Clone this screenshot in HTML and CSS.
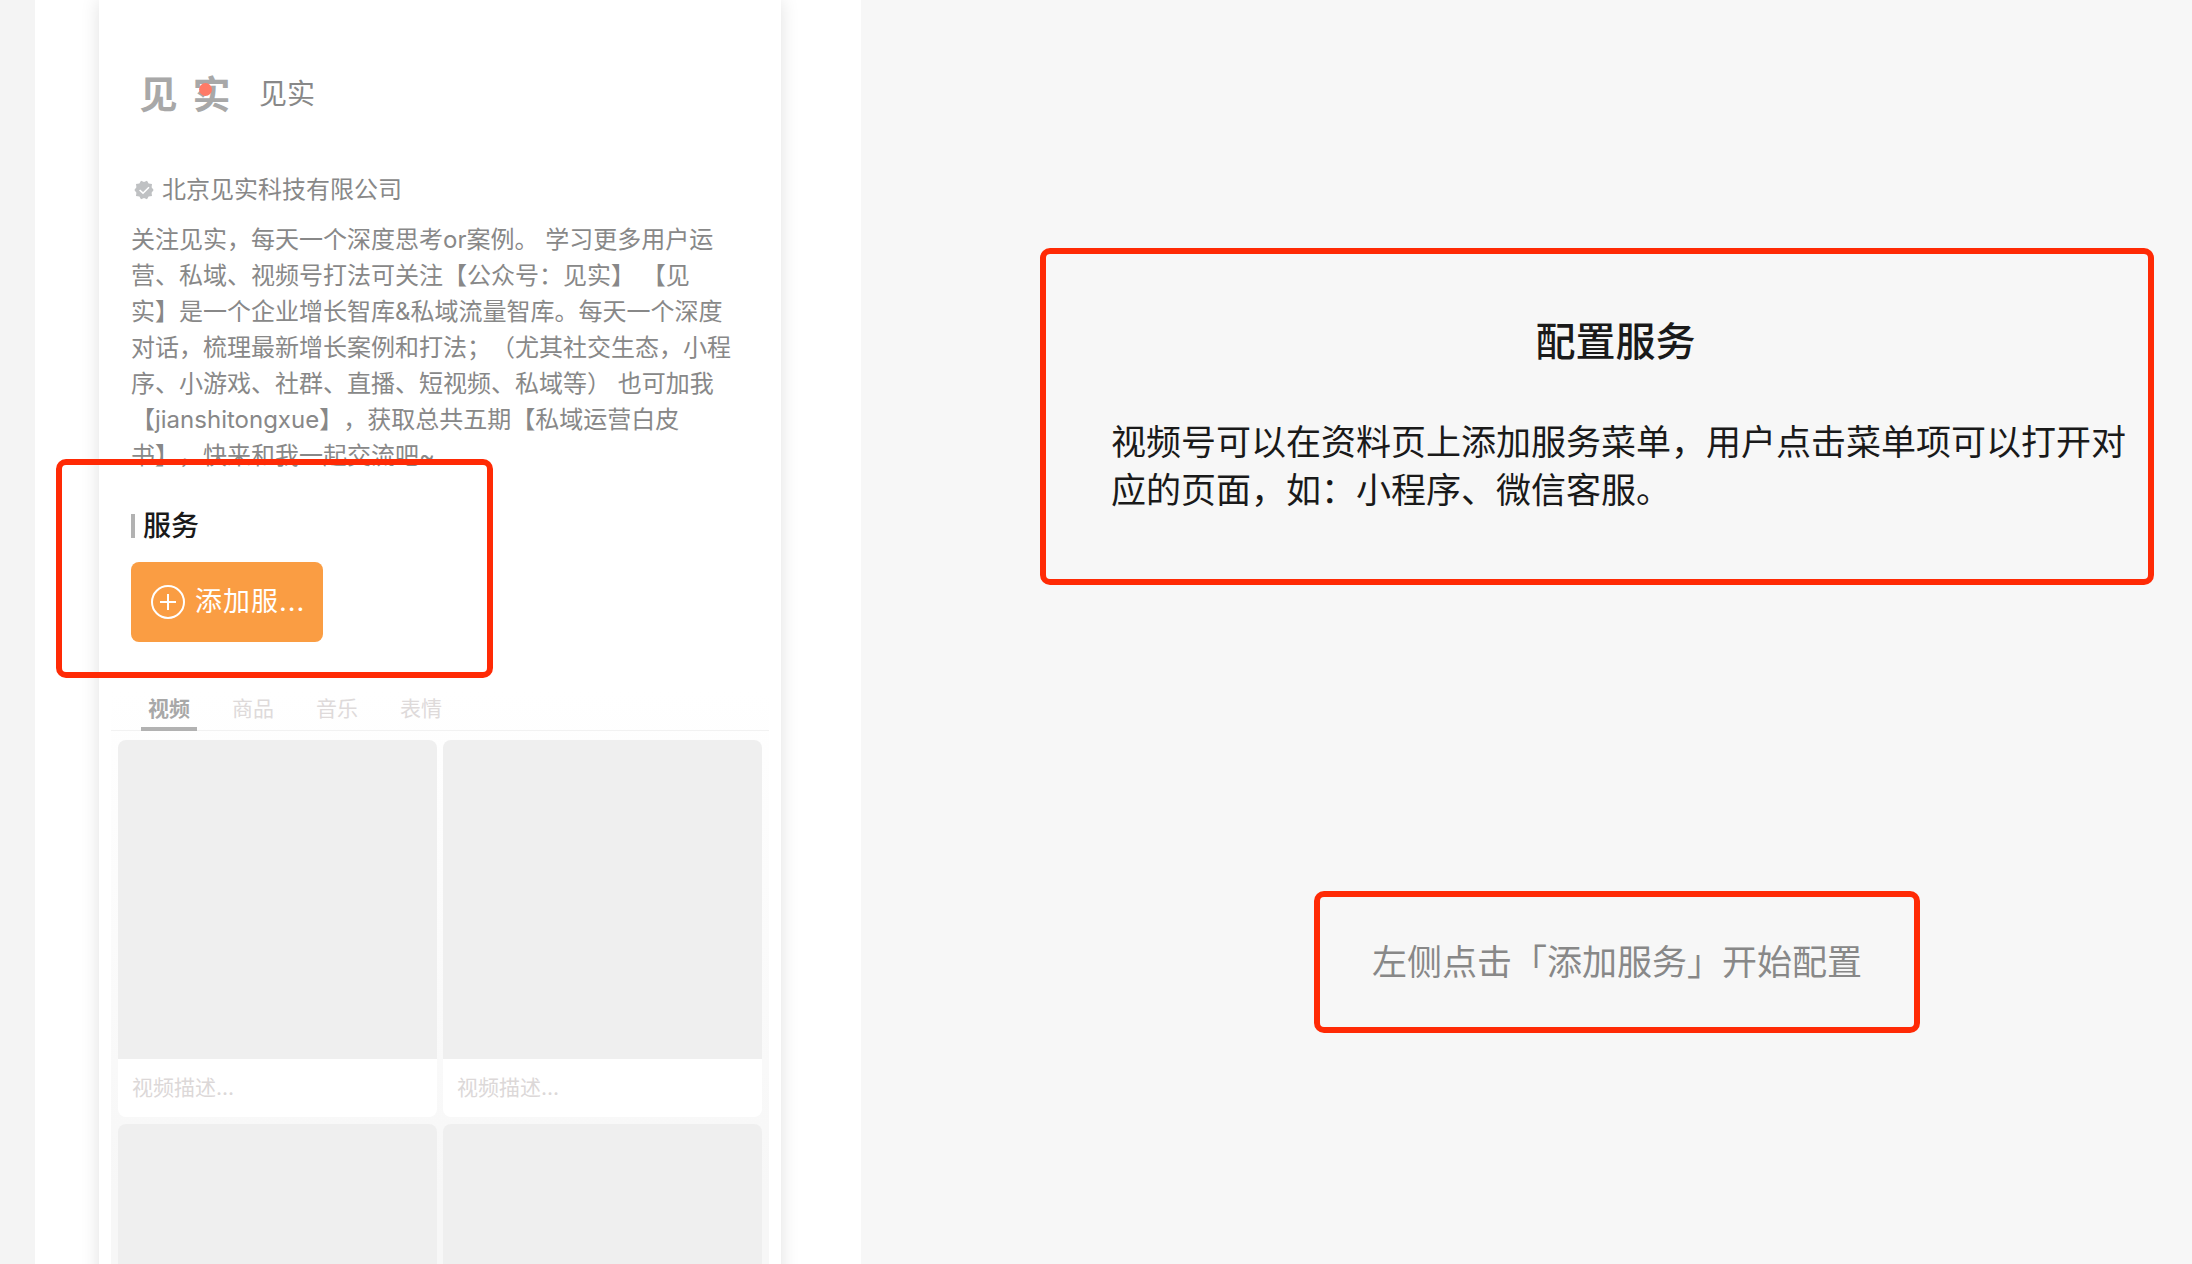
FILE: index.html
```html
<!DOCTYPE html>
<html lang="zh-CN">

<head>
  <meta charset="utf-8">
  <title>配置服务</title>
  <link rel="stylesheet" href="styles.css">
</head>

<body>
  <div class="page">
    <div class="preview">
      <div class="phone">
        <div class="profile">
          <div class="profile-header">
            <div class="logo">
              <span>见</span>
              <span>实</span>
              <i class="logo-dot"></i>
            </div>
            <div class="name">见实</div>
          </div>

          <div class="company">
            <svg class="badge" viewBox="0 0 20 20">
              <path d="M7 0.8 L10 2 L13 0.8 L14.6 3.6 L18 4 L17.6 7.2 L19.6 10 L17.6 12.8 L18 16 L14.6 16.4 L13 19.2 L10 18 L7 19.2 L5.4 16.4 L2 16 L2.4 12.8 L0.4 10 L2.4 7.2 L2 4 L5.4 3.6 Z" fill="#bfc1c3" />
              <path d="M5.6 10 L9 13.2 L15 7.2" fill="none" stroke="#fff" stroke-width="1.6" />
            </svg>
            北京见实科技有限公司
          </div>

          <p class="desc">关注见实，每天一个深度思考or案例。 学习更多用户运<br>营、私域、视频号打法可关注【公众号：见实】 【见<br>实】是一个企业增长智库&amp;私域流量智库。每天一个深度<br>对话，梳理最新增长案例和打法；（尤其社交生态，小程<br>序、小游戏、社群、直播、短视频、私域等） 也可加我<br>【jianshitongxue】，获取总共五期【私域运营白皮<br>书】，快来和我一起交流吧~</p>

          <div class="service">
            <h3 class="service-title">服务</h3>
            <button class="add-btn" type="button">
              <svg class="add-icon" viewBox="0 0 34 34" fill="none" stroke="#fff" stroke-width="2">
                <circle cx="17" cy="17" r="16" />
                <path d="M17 9 V25 M9 17 H25" />
              </svg>
              <span>添加服...</span>
            </button>
            <div class="mark service-mark"></div>
          </div>
        </div>

        <div class="videos">
          <div class="tabs">
            <div class="tab active">视频</div>
            <div class="tab">商品</div>
            <div class="tab">音乐</div>
            <div class="tab">表情</div>
          </div>
          <div class="video-list">
            <div class="card">
              <div class="cover"></div>
              <div class="caption">视频描述...</div>
            </div>
            <div class="card">
              <div class="cover"></div>
              <div class="caption">视频描述...</div>
            </div>
            <div class="card">
              <div class="cover"></div>
            </div>
            <div class="card">
              <div class="cover"></div>
            </div>
          </div>
        </div>
      </div>
    </div>

    <div class="config">
      <div class="mark intro">
        <h2>配置服务</h2>
        <p>视频号可以在资料页上添加服务菜单，用户点击菜单项可以打开对<br>应的页面，如：小程序、微信客服。</p>
      </div>
      <div class="hint-row">
        <div class="mark hint">左侧点击「添加服务」开始配置</div>
      </div>
    </div>
  </div>
</body>

</html>
```

FILE: styles.css
```css
* {
  box-sizing: border-box;
}

body {
  margin: 0;
  font-family: Inter, "Noto Sans CJK SC", sans-serif;
  color: #1a1a1a;
  background-color: #f7f7f7;
  text-spacing-trim: space-all;
}

h2,
h3,
p {
  margin: 0;
  font-weight: 500;
}

.page {
  display: flex;
  height: 100vh;
  overflow: hidden;
}

/* 左侧预览 */
.preview {
  flex: none;
  padding: 0 80px 0 64px;
  background-color: #fff;
  border-left: 35px solid #f4f4f4;
}

.phone {
  width: 682px;
  min-height: 100%;
  background-color: #fff;
  box-shadow: 0 0 18px rgba(0, 0, 0, 0.12);
}

.profile {
  padding: 58px 32px 0;
  font-size: 24px;
  line-height: 36px;
  color: #888;
}

.profile-header {
  display: flex;
  align-items: center;
  gap: 20px;
  height: 72px;
  margin-bottom: 42px;
}

.logo {
  position: relative;
  display: flex;
  justify-content: center;
  gap: 15px;
  width: 108px;
  font-size: 38px;
  font-weight: 700;
  color: #a8a8a8;
}

.logo-dot {
  position: absolute;
  top: 7px;
  left: 68px;
  width: 13px;
  height: 13px;
  border-radius: 50%;
  background-color: #ff7a66;
}

.name {
  font-size: 28px;
}

.company {
  display: flex;
  align-items: center;
  gap: 8px;
  margin-bottom: 14px;
}

.badge {
  width: 20px;
  height: 20px;
  margin-left: 3px;
}

.desc {
  font-weight: 400;
  white-space: nowrap;
}

.service {
  position: relative;
  margin-top: 34px;
}

.service-title {
  display: flex;
  align-items: center;
  gap: 8px;
  margin-bottom: 18px;
  font-size: 28px;
  color: #1a1a1a;
}

.service-title::before {
  content: "";
  width: 4px;
  height: 24px;
  background-color: #b2b2b2;
}

.add-btn {
  display: flex;
  align-items: center;
  gap: 10px;
  width: 192px;
  height: 80px;
  padding: 0 20px;
  border: none;
  border-radius: 8px;
  background-color: #fa9d43;
  color: #fff;
  font-family: inherit;
  font-size: 27px;
  line-height: 36px;
  letter-spacing: 1px;
  white-space: nowrap;
  cursor: pointer;
}

.add-icon {
  flex: none;
  width: 34px;
  height: 34px;
}

/* 红色标注框 */
.mark {
  border: 6px solid #ff2a05;
  border-radius: 10px;
}

.service-mark {
  position: absolute;
  top: -49px;
  left: -75px;
  width: 437px;
  height: 219px;
  pointer-events: none;
}

.videos {
  margin: 49px 12px 0;
  background: linear-gradient(#fff, #f7f7f7 500px);
}

.tabs {
  display: flex;
  gap: 28px;
  padding-left: 30px;
  border-bottom: 1px solid #f2f2f2;
}

.tab {
  margin-bottom: -1px;
  padding: 0 7px;
  border-bottom: 4px solid transparent;
  font-size: 21px;
  line-height: 36px;
  color: #dedada;
}

.tab.active {
  border-bottom-color: #b2b2b2;
  font-weight: 700;
  color: #a8a8a8;
}

.video-list {
  display: grid;
  grid-template-columns: 1fr 1fr;
  gap: 7px 6px;
  padding: 9px 7px 0;
}

.card {
  overflow: hidden;
  border-radius: 8px;
  background-color: #fff;
}

.cover {
  aspect-ratio: 1;
  background-color: #efefef;
}

.caption {
  padding-left: 14px;
  font-size: 21px;
  line-height: 58px;
  color: #dcd8d8;
}

/* 右侧配置 */
.config {
  flex: 1;
  min-width: 0;
  padding: 248px 38px 0 179px;
  font-size: 35px;
  line-height: 48px;
}

.intro {
  padding: 58px 28px 65px 65px;
}

.intro h2 {
  margin-bottom: 46px;
  font-size: 40px;
  line-height: 60px;
  text-align: center;
}

.intro p {
  font-weight: 400;
  white-space: nowrap;
}

.hint-row {
  display: flex;
  justify-content: center;
  margin-top: 306px;
  padding-left: 40px;
}

.hint {
  padding: 41px 52px;
  color: #888;
}
```
